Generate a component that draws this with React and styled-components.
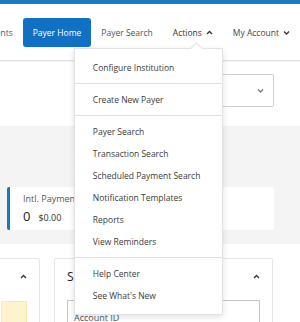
import React from 'react';
import styled, { createGlobalStyle } from 'styled-components';

const GlobalStyle = createGlobalStyle`
  html, body {
    margin: 0;
    padding: 0;
    background: #fff;
  }
  body {
    width: 300px;
    height: 322px;
    overflow: hidden;
    font-family: "Open Sans", "Noto Sans", sans-serif;
    color: #333;
  }
  * {
    box-sizing: border-box;
  }
`;

const TopBar = styled.div`
  height: 4px;
  background: #1a7bbf;
`;

const Header = styled.header`
  height: 57px;
  display: flex;
  align-items: center;
  justify-content: flex-end;
  border-bottom: 1px solid #e3e3e3;
  box-shadow: 0 1px 0 #f1f1f1;
  position: relative;
  z-index: 5;
`;

const NavItem = styled.div`
  position: relative;
  height: 29px;
  padding: 0 10px;
  display: flex;
  align-items: center;
  gap: 4px;
  font-size: 8.5px;
  white-space: nowrap;
  color: ${(p) => p.$color || '#555'};
  background: ${(p) => (p.$active ? '#1270c4' : 'transparent')};
  border-radius: 3px;
  ${(p) => p.$active && 'color: #fff;'}
`;

const Chevron = ({ up }) => (
  <svg width="7" height="5" viewBox="0 0 7 5">
    <polyline
      points={up ? '1,4 3.5,1.5 6,4' : '1,1.5 3.5,4 6,1.5'}
      fill="none"
      stroke="#333"
      strokeWidth="1.3"
    />
  </svg>
);

const Menu = styled.div`
  position: absolute;
  top: calc(100% + 1px);
  right: 0;
  width: 149px;
  background: #fff;
  border: 1px solid #e2e2e2;
  box-shadow: 0 2px 6px rgba(0, 0, 0, 0.12);
  padding: 3px 0;
  z-index: 20;

  &::before {
    content: '';
    position: absolute;
    top: -5px;
    left: 117px;
    width: 8px;
    height: 8px;
    background: #fff;
    border-top: 1px solid #e2e2e2;
    border-left: 1px solid #e2e2e2;
    transform: rotate(45deg);
  }
`;

const MenuGroup = styled.div`
  padding: 5px 0 4px;
  & + & {
    border-top: 1px solid #e1e1e1;
  }
`;

const MenuItem = styled.div`
  height: 22px;
  line-height: 22px;
  padding-left: 18px;
  font-size: 8.5px;
  color: #3a3a3a;
  white-space: nowrap;
`;

const FilterBand = styled.section`
  height: 65px;
  display: flex;
  justify-content: flex-end;
  padding: 13px 26px 0 0;
`;

const Select = styled.div`
  width: 160px;
  height: 33px;
  border: 1px solid #cfcfcf;
  border-radius: 2px;
  display: flex;
  align-items: center;
  justify-content: flex-end;
  padding-right: 9px;
`;

const SummaryBand = styled.section`
  height: 118px;
  background: #f4f4f4;
  padding: 61px 26px 0 7px;
`;

const StatCard = styled.div`
  height: 43px;
  background: #fff;
  border-left: 3px solid #1a78c2;
  border-radius: 2px;
  padding: 6px 0 0 13px;
`;

const StatLabel = styled.div`
  font-size: 9px;
  color: #555;
  line-height: 12px;
`;

const StatValues = styled.div`
  display: flex;
  align-items: baseline;
  gap: 8px;
  margin-top: 2px;
`;

const StatCount = styled.span`
  font-size: 13px;
  color: #222;
`;

const StatAmount = styled.span`
  font-size: 9px;
  color: #333;
`;

const PanelRow = styled.section`
  display: flex;
  gap: 14px;
  padding-top: 14px;
  margin-left: -100px;
`;

const Panel = styled.div`
  width: ${(p) => p.$width}px;
  height: 80px;
  border: 1px solid #e6e6e6;
  border-radius: 2px;
  padding: 0 12px;
`;

const PanelHead = styled.div`
  height: 34px;
  display: flex;
  align-items: center;
  justify-content: space-between;
`;

const PanelTitle = styled.span`
  font-size: 12px;
  color: #222;
`;

const Notice = styled.div`
  margin-top: 8px;
  margin-left: 88px;
  height: 30px;
  background: #fff3cd;
  border: 1px solid #fbe9b3;
`;

const Field = styled.div`
  margin-top: 7px;
  height: 30px;
  border: 1px solid #c4c4c4;
  padding: 10px 0 0 6px;
  font-size: 9px;
  color: #555;
`;

const App = () => (
  <>
    <GlobalStyle />
    <TopBar />
    <Header>
      <NavItem>Payments</NavItem>
      <NavItem $active>Payer Home</NavItem>
      <NavItem>Payer Search</NavItem>
      <NavItem $color="#333">
        Actions <Chevron up />
        <Menu>
          <MenuGroup>
            <MenuItem>Configure Institution</MenuItem>
          </MenuGroup>
          <MenuGroup>
            <MenuItem>Create New Payer</MenuItem>
          </MenuGroup>
          <MenuGroup>
            <MenuItem>Payer Search</MenuItem>
            <MenuItem>Transaction Search</MenuItem>
            <MenuItem>Scheduled Payment Search</MenuItem>
            <MenuItem>Notification Templates</MenuItem>
            <MenuItem>Reports</MenuItem>
            <MenuItem>View Reminders</MenuItem>
          </MenuGroup>
          <MenuGroup>
            <MenuItem>Help Center</MenuItem>
            <MenuItem>See What&apos;s New</MenuItem>
          </MenuGroup>
        </Menu>
      </NavItem>
      <NavItem $color="#444">
        My Account <Chevron />
      </NavItem>
    </Header>
    <FilterBand>
      <Select>
        <svg width="7" height="5" viewBox="0 0 7 5">
          <polyline points="1,1.5 3.5,4 6,1.5" fill="none" stroke="#666" strokeWidth="1.1" />
        </svg>
      </Select>
    </FilterBand>
    <SummaryBand>
      <StatCard>
        <StatLabel>Intl. Payments</StatLabel>
        <StatValues>
          <StatCount>0</StatCount>
          <StatAmount>$0.00</StatAmount>
        </StatValues>
      </StatCard>
    </SummaryBand>
    <PanelRow>
      <Panel $width={140}>
        <PanelHead>
          <span />
          <Chevron up />
        </PanelHead>
        <Notice />
      </Panel>
      <Panel $width={219}>
        <PanelHead>
          <PanelTitle>Search Payers</PanelTitle>
          <Chevron up />
        </PanelHead>
        <Field>Account ID</Field>
      </Panel>
    </PanelRow>
  </>
);

export default App;
